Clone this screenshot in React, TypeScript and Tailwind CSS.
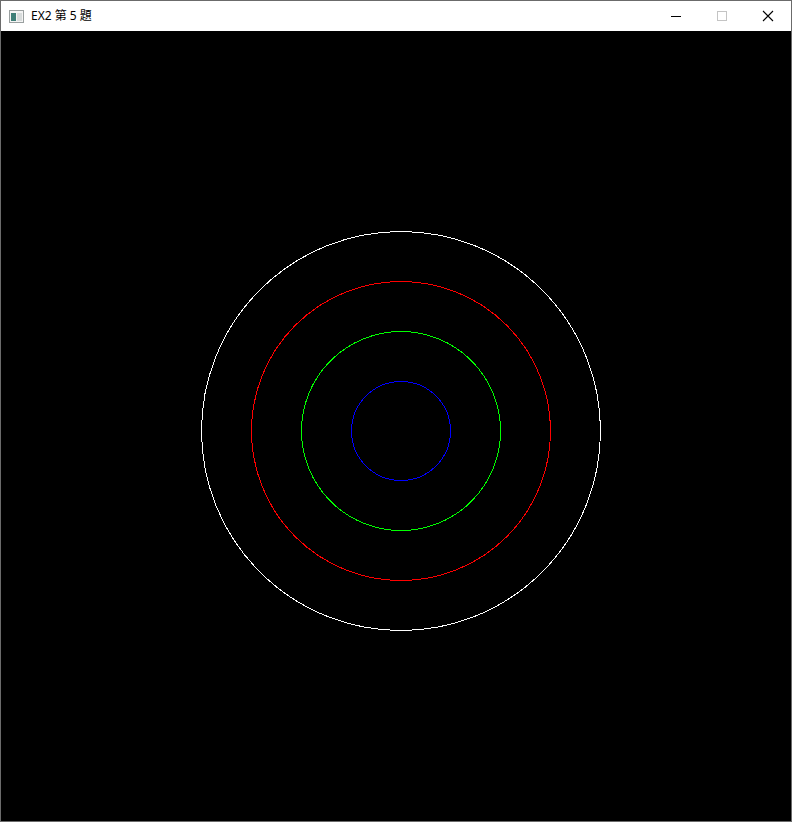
import React from "react";

export default function App() {
  return (
    <div className="w-[792px] h-[822px] flex flex-col bg-black border border-[#6b6b6b] overflow-hidden">
      <div className="h-[30px] shrink-0 bg-white flex items-center relative">
        <div className="ml-[8px] mr-[7px] w-[15px] h-[13px]">
          <svg width="15" height="13" viewBox="0 0 15 13">
            <rect x="0.5" y="0.5" width="14" height="12" fill="#f4f4f4" stroke="#9aa0a0" />
            <rect x="2" y="3" width="5" height="8" fill="#3f7f78" />
            <rect x="8" y="3" width="5" height="8" fill="#d8dcdc" />
          </svg>
        </div>
        <span
          className="text-[12px] text-black leading-none"
          style={{ fontFamily: '"Noto Sans", "Noto Sans CJK TC", sans-serif' }}
        >
          EX2 第 5 題
        </span>
        <div className="ml-auto flex h-full items-center">
          <div className="w-[46px] h-full flex items-center justify-center">
            <svg width="12" height="12" viewBox="0 0 12 12">
              <rect x="1" y="6" width="10" height="1" fill="#000" />
            </svg>
          </div>
          <div className="w-[46px] h-full flex items-center justify-center">
            <svg width="12" height="12" viewBox="0 0 12 12">
              <rect x="1.5" y="1.5" width="9" height="9" fill="none" stroke="#c4c4c4" />
            </svg>
          </div>
          <div className="w-[46px] h-full flex items-center justify-center">
            <svg width="12" height="12" viewBox="0 0 12 12">
              <path d="M1 1 L11 11 M11 1 L1 11" stroke="#000" strokeWidth="1.1" />
            </svg>
          </div>
        </div>
      </div>
      <div className="flex-1 bg-black">
        <svg width="790" height="791" viewBox="0 0 790 791" shapeRendering="crispEdges">
          <circle cx="400" cy="400" r="199.5" fill="none" stroke="#ffffff" strokeWidth="1" />
          <circle cx="400" cy="400" r="149.5" fill="none" stroke="#ff0000" strokeWidth="1" />
          <circle cx="400" cy="400" r="99.5" fill="none" stroke="#00ff00" strokeWidth="1" />
          <circle cx="400" cy="400" r="49.5" fill="none" stroke="#0000ff" strokeWidth="1" />
        </svg>
      </div>
    </div>
  );
}
